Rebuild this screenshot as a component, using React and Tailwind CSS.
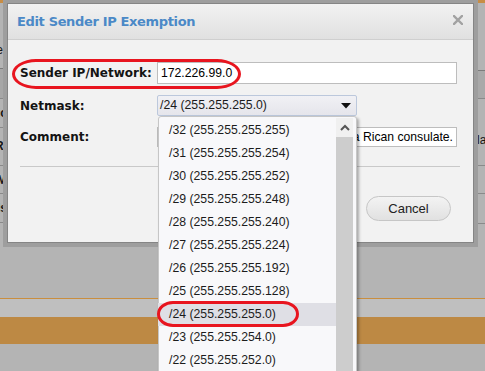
import React from "react";

const masks = [
  "/32 (255.255.255.255)",
  "/31 (255.255.255.254)",
  "/30 (255.255.255.252)",
  "/29 (255.255.255.248)",
  "/28 (255.255.255.240)",
  "/27 (255.255.255.224)",
  "/26 (255.255.255.192)",
  "/25 (255.255.255.128)",
  "/24 (255.255.255.0)",
  "/23 (255.255.254.0)",
  "/22 (255.255.252.0)",
  "/21 (255.255.248.0)",
];

const sans = { fontFamily: '"Liberation Sans", Arial, sans-serif' };
const deja = { fontFamily: '"DejaVu Sans", Verdana, sans-serif' };

function StripText({ children, bold }) {
  return (
    <div className="flex justify-end overflow-hidden whitespace-nowrap">
      <span className={`text-[12px] text-[#161616] ${bold ? "font-bold" : ""}`} style={sans}>
        {children}
      </span>
    </div>
  );
}

export default function App() {
  return (
    <div className="relative w-[485px] h-[371px] overflow-hidden bg-[#b4b4b4] flex flex-col">
      {/* background page */}
      <div className="h-[3px] bg-[#c88d45]" />
      <div className="h-[295px] flex">
        {/* left strip */}
        <div className="w-[7px] flex flex-col">
          <div className="h-[65px] flex flex-col justify-end pb-[9px]">
            <StripText>Sender</StripText>
          </div>
          <div className="h-px bg-[#7c7c7c]" />
          <div className="h-[29px] bg-[#a7a7a7]" />
          <div className="h-px bg-[#8a8a8a]" />
          <div className="h-[28px] flex flex-col justify-center">
            <StripText bold>Public</StripText>
          </div>
          <div className="h-px bg-[#8a8a8a]" />
          <div className="h-[37px] flex flex-col justify-center pb-[1px]">
            <StripText bold>Costa Ri</StripText>
          </div>
          <div className="h-px bg-[#8a8a8a]" />
          <div className="h-[27px] flex flex-col justify-center">
            <StripText bold>M</StripText>
          </div>
          <div className="h-px bg-[#8a8a8a]" />
          <div className="h-[28px] flex flex-col justify-center">
            <StripText bold>Ns</StripText>
          </div>
          <div className="h-px bg-[#8a8a8a]" />
        </div>
        <div className="flex-1" />
        {/* right strip */}
        <div className="w-[8px] flex flex-col">
          <div className="h-[67px]" />
          <div className="h-px bg-[#7c7c7c]" />
          <div className="h-[27px] bg-[#a9a9a9]" />
          <div className="h-px bg-[#8a8a8a]" />
          <div className="h-[66px] flex flex-col justify-center pt-[12px]">
            <div className="overflow-hidden whitespace-nowrap">
              <span className="text-[12px] text-[#161616]" style={sans}>
                lated
              </span>
            </div>
          </div>
          <div className="h-px bg-[#8a8a8a]" />
          <div className="h-[27px]" />
          <div className="h-px bg-[#8a8a8a]" />
          <div className="h-[29px]" />
          <div className="h-px bg-[#8a8a8a]" />
        </div>
      </div>
      <div className="h-px bg-[#c98e3f]" />
      <div className="h-[18px] bg-[#bfbfbf]" />
      <div className="h-[27px] bg-[#bd8944]" />
      <div className="flex-1 bg-[#b4b4b4]" />

      {/* dialog */}
      <div className="absolute left-[7px] top-[3px] w-[467px] h-[240px] border border-[#858585] bg-[#f2f2f2] shadow-[0_0_0_4px_#9e9e9e] flex flex-col">
        <div className="h-[36px] border-b border-[#cfcfcf] bg-linear-to-b from-[#f2f2f2] to-[#e0e0e0] flex items-center justify-between pl-[9px] pr-[10px]">
          <span className="text-[13px] font-bold text-[#4b89c7] tracking-[-0.35px]" style={deja}>
            Edit Sender IP Exemption
          </span>
          <svg width="10" height="10" viewBox="0 0 10 10" className="mb-[4px]">
            <path d="M1 1 L9 9 M9 1 L1 9" stroke="#a2a2a2" strokeWidth="2.4" strokeLinecap="square" />
          </svg>
        </div>
        <div className="flex flex-col pl-[12px] pr-[13px] pt-[22px]">
          <div className="flex items-center h-[22px]">
            <div className="w-[137px] text-[12px] font-bold text-[#141414]" style={deja}>
              Sender IP/Network:
            </div>
            <div className="w-[300px] h-[22px] border border-[#bdbdbd] bg-white flex items-center pl-[3px] text-[12.2px] text-black" style={sans}>
              172.226.99.0
            </div>
          </div>
          <div className="flex items-center h-[21px] mt-[11px]">
            <div className="w-[137px] text-[12px] font-bold text-[#141414]" style={deja}>
              Netmask:
            </div>
            <div className="w-[200px] h-[21px] border border-[#bcc8dc] rounded-[2px] bg-linear-to-b from-[#f1f1f5] to-[#e5e5eb] flex items-center justify-between pl-[2px] pr-[5px] text-[12.25px] text-[#1a1a1a]" style={sans}>
              <span>/24 (255.255.255.0)</span>
              <svg width="10" height="6" viewBox="0 0 10 6">
                <path d="M0 0 H10 L5 5.5 Z" fill="#111" />
              </svg>
            </div>
          </div>
          <div className="flex items-center h-[20px] mt-[11px]">
            <div className="w-[137px] text-[12px] font-bold text-[#141414]" style={deja}>
              Comment:
            </div>
            <div className="w-[300px] h-[20px] border border-[#bdbdbd] bg-white flex items-center justify-end overflow-hidden whitespace-nowrap pr-[3px] text-[12.2px] text-black" style={sans}>
              <span>IP address of the Costa Rican consulate.</span>
            </div>
          </div>
          <div className="mt-[19px] h-px w-[440px] bg-[#c9c9c9]" />
          <div className="mt-[29px] flex justify-end pr-[9px]">
            <div className="w-[85px] h-[25px] rounded-full border border-[#c6c6c6] bg-linear-to-b from-[#f3f3f3] to-[#e1e1e1] flex items-center justify-center text-[13px] text-[#222]" style={sans}>
              Cancel
            </div>
          </div>
        </div>
      </div>

      {/* dropdown */}
      <div className="absolute left-[158px] top-[116px] w-[199px] h-[270px] border border-[#c6c6c6] rounded-t-[3px] bg-[#f8f8fa] shadow-[2px_2px_3px_rgba(0,0,0,0.3)] flex">
        <div className="w-[177px] pt-[2px] flex flex-col">
          {masks.map((m) => (
            <div
              key={m}
              className={`h-[23px] shrink-0 flex items-center pl-[10px] text-[12.25px] text-[#1c1c1c] ${
                m === "/24 (255.255.255.0)" ? "bg-[#dfdfe5] -ml-px pl-[11px]" : ""
              }`}
              style={sans}
            >
              {m}
            </div>
          ))}
        </div>
        <div className="w-[17px] mt-[1px] flex flex-col">
          <div className="h-[19px] bg-[#f0f0f0] flex items-center justify-center">
            <svg width="10" height="7" viewBox="0 0 10 7">
              <path d="M1 6 L5 2 L9 6" stroke="#555" strokeWidth="2" fill="none" />
            </svg>
          </div>
          <div className="flex-1 bg-[#cdcdcd]" />
        </div>
        <div className="w-[3px]" />
      </div>

      {/* red annotation ellipses */}
      <div className="absolute left-[12px] top-[59px] w-[229px] h-[30px] border-[3px] border-[#e8151f] rounded-[24px/15px]" />
      <div className="absolute left-[157px] top-[301px] w-[142px] h-[26px] border-[3px] border-[#e8151f] rounded-[16px/13px]" />
    </div>
  );
}
